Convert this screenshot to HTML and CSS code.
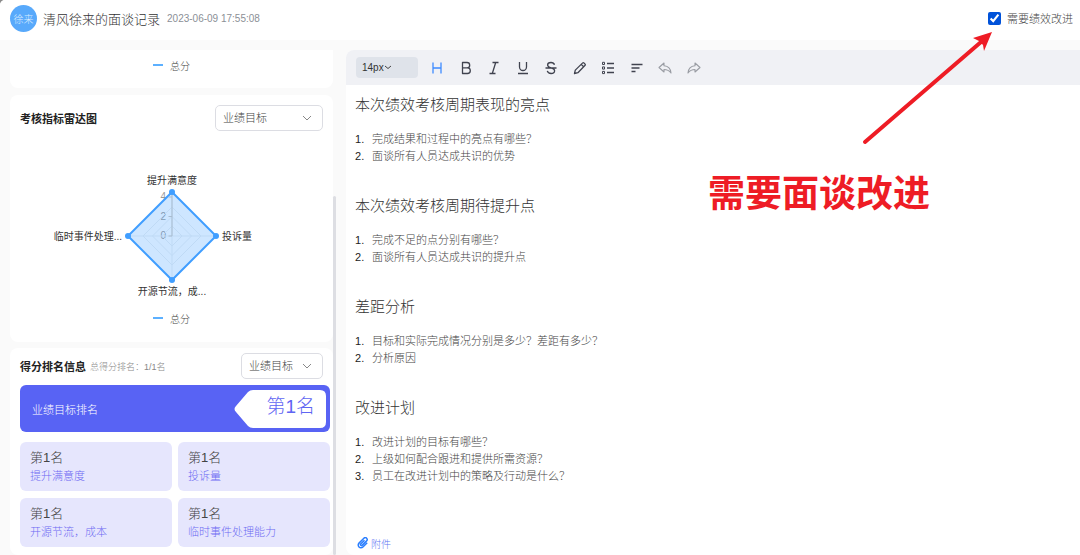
FILE: index.html
```html
<!DOCTYPE html>
<html lang="zh-CN">
<head>
<meta charset="utf-8">
<meta name="viewport" content="width=device-width, initial-scale=1">
<title>面谈记录</title>
<link rel="stylesheet" href="styles.css">
</head>
<body>
<div class="page">
  <header class="topbar">
    <span class="avatar">徐来</span>
    <h1 class="topbar-title">清风徐来的面谈记录</h1>
    <time class="topbar-time">2023-06-09 17:55:08</time>
    <label class="improve"><input type="checkbox" class="improve-box" checked>需要绩效改进</label>
  </header>

  <div class="layout">
    <aside class="side">
      <div class="side-cards">
        <section class="card card-cut">
          <div class="legend"><span class="legend-line"></span>总分</div>
        </section>

        <section class="card card-radar">
          <div class="card-head">
            <h2 class="card-title">考核指标雷达图</h2>
            <div class="picker picker-wide">
              <select class="picker-select" aria-label="雷达图指标"><option>业绩目标</option></select>
              <svg class="picker-arrow" viewBox="0 0 10 10"><path d="M1 3l4 4 4-4"/></svg>
            </div>
          </div>
          <svg class="radar" viewBox="0 0 240 130" role="img" aria-label="考核指标雷达图">
            <g class="radar-ticks">
              <text x="114" y="29">4</text><text x="114" y="49">2</text><text x="114" y="68">0</text>
            </g>
            <path class="radar-area" d="M120 21L164 65L120 109L76 65Z"/>
            <g class="radar-grid">
              <path d="M120 55l10 10-10 10-10-10zM120 45.500l19.500 19.500-19.500 19.500-19.500-19.500zM120 36l29 29-29 29-29-29z"/>
              <path d="M78 65H162M120 23V107"/>
            </g>
            <path class="radar-axis" d="M120 21V65M116.500 65H120M116.500 45.500H120M116.500 26H120"/>
            <g class="radar-dots">
              <circle cx="120" cy="21" r="3"/><circle cx="164" cy="65" r="3"/><circle cx="120" cy="109" r="3"/><circle cx="76" cy="65" r="3"/>
            </g>
            <g class="radar-labels">
              <text x="120" y="13" text-anchor="middle">提升满意度</text>
              <text x="170" y="69">投诉量</text>
              <text x="120" y="124" text-anchor="middle">开源节流，成...</text>
              <text x="70" y="69" text-anchor="end">临时事件处理...</text>
            </g>
          </svg>
          <div class="legend"><span class="legend-line"></span>总分</div>
        </section>

        <section class="card card-rank">
          <div class="card-head">
            <h2 class="card-title">得分排名信息</h2>
            <span class="card-note">总得分排名：1/1名</span>
            <div class="picker">
              <select class="picker-select" aria-label="排名指标"><option>业绩目标</option></select>
              <svg class="picker-arrow" viewBox="0 0 10 10"><path d="M1 3l4 4 4-4"/></svg>
            </div>
          </div>
          <div class="banner">
            <span>业绩目标排名</span>
            <div class="banner-tag">
              <svg class="banner-shape" viewBox="0 0 92 38"><path d="M19 0H86Q92 0 92 6V32Q92 38 86 38H19Q16 38 14 36L2 22Q-1 19 2 16L14 2Q16 0 19 0Z"/></svg>
              <strong class="banner-rank">第1名</strong>
            </div>
          </div>
          <div class="tiles">
            <div class="tile"><span class="tile-rank">第1名</span><span class="tile-name">提升满意度</span></div>
            <div class="tile"><span class="tile-rank">第1名</span><span class="tile-name">投诉量</span></div>
            <div class="tile"><span class="tile-rank">第1名</span><span class="tile-name">开源节流，成本</span></div>
            <div class="tile"><span class="tile-rank">第1名</span><span class="tile-name">临时事件处理能力</span></div>
          </div>
        </section>
      </div>
      <div class="side-scroll"><div class="side-thumb"></div></div>
    </aside>

    <main class="editor">
      <div class="toolbar">
        <div class="size">
          <select class="size-select" aria-label="字号"><option>14px</option></select>
          <svg class="size-arrow" viewBox="0 0 8 8"><path d="M1 3l3 2.500 3-2.500"/></svg>
        </div>
        <div class="tools">
          <button class="tool tool-on" aria-label="标题"><svg viewBox="0 0 16 16"><path d="M4 2.500v11M12 2.500v11M4 8h8"/></svg></button>
          <button class="tool" aria-label="加粗"><svg viewBox="0 0 16 16"><path d="M4.500 2.500h4.500a2.700 2.700 0 0 1 0 5.400H4.500zM4.500 7.900h5a2.800 2.800 0 0 1 0 5.600h-5z"/></svg></button>
          <button class="tool" aria-label="斜体"><svg viewBox="0 0 16 16"><path d="M6.500 2.500h6M3.500 13.500h6M9.700 2.500l-3.400 11"/></svg></button>
          <button class="tool" aria-label="下划线"><svg viewBox="0 0 16 16"><path d="M4.500 2v5a3.500 3.500 0 0 0 7 0V2M3 13.500h10"/></svg></button>
          <button class="tool" aria-label="删除线"><svg viewBox="0 0 16 16"><path d="M11.500 4.800C11 3.200 9.700 2.500 8 2.500 6 2.500 4.600 3.500 4.600 5.100c0 1.500 1.200 2.200 3.400 2.800 2.400.6 3.600 1.300 3.600 2.900 0 1.700-1.500 2.700-3.500 2.700-2 0-3.400-.9-3.800-2.600M2.500 8h11"/></svg></button>
          <button class="tool" aria-label="画笔"><svg viewBox="0 0 16 16"><path d="M2.500 13.500l.8-3.400 7.400-7.200q.6-.5 1.200 0l1.200 1.200q.5.600 0 1.200l-7.200 7.400zM9.200 4.400l2.400 2.400"/></svg></button>
          <button class="tool" aria-label="列表"><svg viewBox="0 0 16 16"><path d="M7 3.500h7M7 8h7M7 12.500h7"/><path class="thin" d="M2.500 2.300h2v2.200h-2zM2.500 6.900h2v2.200h-2zM2.500 11.400h2v2.200h-2z"/></svg></button>
          <button class="tool" aria-label="对齐"><svg viewBox="0 0 16 16"><path d="M2.500 4.500h11M2.500 8h8M2.500 11.500h4"/></svg></button>
          <button class="tool tool-off" aria-label="撤销"><svg viewBox="0 0 16 16"><path d="M7 3L2 7.500 7 12V9.500c3 0 5 .8 7 3.500-.3-4-2.800-7-7-7.300z"/></svg></button>
          <button class="tool tool-off" aria-label="重做"><svg viewBox="0 0 16 16"><path d="M9 3l5 4.500L9 12V9.500c-3 0-5 .8-7 3.500.3-4 2.800-7 7-7.300z"/></svg></button>
        </div>
      </div>
      <div class="doc">
        <section class="topic">
          <h3 class="topic-title">本次绩效考核周期表现的亮点</h3>
          <ol class="topic-list"><li>完成结果和过程中的亮点有哪些？</li><li>面谈所有人员达成共识的优势</li></ol>
        </section>
        <section class="topic">
          <h3 class="topic-title">本次绩效考核周期待提升点</h3>
          <ol class="topic-list"><li>完成不足的点分别有哪些？</li><li>面谈所有人员达成共识的提升点</li></ol>
        </section>
        <section class="topic">
          <h3 class="topic-title">差距分析</h3>
          <ol class="topic-list"><li>目标和实际完成情况分别是多少？差距有多少？</li><li>分析原因</li></ol>
        </section>
        <section class="topic">
          <h3 class="topic-title">改进计划</h3>
          <ol class="topic-list"><li>改进计划的目标有哪些？</li><li>上级如何配合跟进和提供所需资源？</li><li>员工在改进计划中的策略及行动是什么？</li></ol>
        </section>
        <a class="attach" href="#"><svg class="attach-icon" viewBox="0 0 12 12"><path d="M7.500 3.200L3.700 7a1 1 0 0 0 1.400 1.400l4.500-4.500a1.900 1.900 0 0 0-2.700-2.700L2 6.100a2.700 2.700 0 0 0 3.900 3.900l4.300-4.300"/></svg>附件</a>
      </div>
    </main>
  </div>

  <svg class="arrow" viewBox="0 0 130 114"><path class="arrow-line" d="M3 110L119 10"/><path class="arrow-head" d="M130 0L111 6L117 9L121 13L122 19Z"/></svg>
  <p class="callout">需要面谈改进</p>
</div>
</body>
</html>
```

FILE: styles.css
```css
* {
  box-sizing: border-box;
}

html {
  background: #8a8a8a;
}

body {
  margin: 0;
  font-family: "Liberation Sans", "Noto Sans CJK SC", sans-serif;
  font-size: 11px;
  font-weight: 300;
  color: #444;
}

h1, h2, h3, p, ol {
  margin: 0;
  padding: 0;
}

select, button, input {
  font: inherit;
  color: inherit;
}

.page {
  position: relative;
  display: flex;
  flex-direction: column;
  height: 100vh;
  min-height: 555px;
  overflow: hidden;
  background: #fafafa;
  border-top-left-radius: 5px;
}

/* Top bar */
.topbar {
  display: flex;
  align-items: center;
  flex: none;
  height: 40px;
  padding: 0 7px 4px 10px;
  background: #fff;
}

.avatar {
  display: flex;
  align-items: center;
  justify-content: center;
  width: 27px;
  height: 27px;
  border-radius: 50%;
  background: #58a9fb;
  color: #d8ebff;
  font-size: 10px;
}

.topbar-title {
  margin: 0 7px 0 6px;
  font-size: 13px;
  font-weight: 300;
  color: #333;
}

.topbar-time {
  font-size: 10px;
  color: #8b8f96;
}

.improve {
  display: flex;
  align-items: center;
  gap: 6px;
  margin-left: auto;
}

.improve-box {
  width: 13px;
  height: 13px;
  margin: 0;
  accent-color: #0052d9;
}

/* Columns */
.layout {
  display: flex;
  flex: 1;
  gap: 10px;
  min-height: 0;
  padding-top: 10px;
}

.side {
  display: flex;
  flex: none;
  width: 336px;
  padding-left: 10px;
}

.side-cards {
  flex: 1;
  overflow: hidden;
}

.side-scroll {
  width: 3px;
  padding-top: 146px;
}

.side-thumb {
  height: 100%;
  border-radius: 2px;
  background: #dddee3;
}

.card {
  margin-bottom: 7px;
  border-radius: 8px;
  background: #fff;
}

.card-cut {
  padding: 7px 0 15px;
  border-radius: 0 0 8px 8px;
}

.card-radar {
  margin-bottom: 6px;
  padding: 10px 10px 16px;
}

.card-rank {
  padding: 5px 3px 8px 10px;
}

.card-rank .card-head {
  padding-right: 7px;
}

.card-head {
  display: flex;
  align-items: center;
}

.card-title {
  font-size: 11px;
  font-weight: 700;
  color: #222;
}

.card-note {
  margin-left: 4px;
  font-size: 9px;
  color: #888;
}

.picker {
  position: relative;
  width: 82px;
  margin-left: auto;
}

.picker-wide {
  width: 108px;
}

.picker-select {
  display: block;
  width: 100%;
  height: 26px;
  padding: 0 20px 0 7px;
  border: 1px solid #dcdde3;
  border-radius: 5px;
  background: #fff;
  color: #444;
  appearance: none;
}

.picker-arrow {
  position: absolute;
  top: 8px;
  right: 11px;
  width: 10px;
  height: 10px;
  fill: none;
  stroke: #888;
  pointer-events: none;
}

.legend {
  display: flex;
  align-items: center;
  justify-content: center;
  gap: 7px;
  height: 16px;
  font-size: 10px;
  color: #444;
}

.legend-line {
  width: 10px;
  height: 2px;
  background: #5cb0ff;
}

/* Radar chart */
.radar {
  display: block;
  width: 240px;
  height: 130px;
  margin: 40px auto 9px;
  font-size: 10px;
}

.radar-grid {
  fill: none;
  stroke: #bfdaf5;
}

.radar-ticks {
  fill: #999;
  text-anchor: end;
}

.radar-area {
  fill: rgba(64, 158, 255, 0.26);
  stroke: #409eff;
  stroke-width: 2;
}

.radar-axis {
  fill: none;
  stroke: #a9bccf;
}

.radar-dots {
  fill: #409eff;
}

.radar-labels {
  font-weight: 400;
  fill: #333;
}

/* Ranking */
.banner {
  display: flex;
  align-items: center;
  justify-content: space-between;
  height: 47px;
  margin: 6px 0 10px;
  padding: 0 4px 0 12px;
  border-radius: 6px;
  background: #5863f4;
  color: #fff;
}

.banner-tag {
  position: relative;
  display: flex;
  align-items: center;
  justify-content: flex-end;
  width: 92px;
  height: 38px;
  padding-right: 11px;
}

.banner-shape {
  position: absolute;
  inset: 0;
  fill: #fff;
}

.banner-rank {
  position: relative;
  font-size: 19px;
  font-weight: 300;
  line-height: 34px;
  padding-bottom: 4px;
  color: #5f66f3;
}

.tiles {
  display: grid;
  grid-template-columns: 1fr 1fr;
  gap: 7px 6px;
}

.tile {
  display: flex;
  flex-direction: column;
  height: 49px;
  padding: 7px 10px;
  border-radius: 6px;
  background: #e6e6fd;
}

.tile-rank {
  font-size: 13px;
  line-height: 18px;
  color: #444;
}

.tile-name {
  line-height: 18px;
  color: #6e6bf3;
}

/* Editor */
.editor {
  display: flex;
  flex: 1;
  flex-direction: column;
  min-width: 0;
  border-radius: 8px 0 0 8px;
  background: #fff;
  overflow: hidden;
}

.toolbar {
  display: flex;
  align-items: center;
  gap: 5px;
  height: 35px;
  padding-left: 10px;
  background: #f0f1f5;
}

.size {
  position: relative;
  width: 62px;
}

.size-select {
  display: block;
  width: 100%;
  height: 21px;
  padding: 0 6px;
  border: 0;
  border-radius: 4px;
  background: #dfe3ea;
  font-size: 10px;
  color: #333;
  appearance: none;
}

.size-arrow {
  position: absolute;
  top: 6px;
  left: 28px;
  width: 8px;
  height: 8px;
  fill: none;
  stroke: #444;
  pointer-events: none;
}

.tools {
  display: flex;
  width: 285px;
}

.tool {
  display: flex;
  flex: 1;
  justify-content: center;
  padding: 0;
  border: 0;
  background: none;
  color: #40434f;
}

.tool svg {
  width: 16px;
  height: 16px;
  fill: none;
  stroke: currentColor;
  stroke-width: 1.3;
  stroke-linejoin: round;
}

.tool .thin {
  stroke-width: 1;
}

.tool-on {
  color: #3d8bff;
}

.tool-off {
  color: #999ca3;
}

.tool-off svg {
  stroke-width: 1.1;
}

.doc {
  display: flex;
  flex: 1;
  flex-direction: column;
  padding: 10px 9px 4px;
}

.topic {
  margin-bottom: 31px;
}

.topic:last-of-type {
  margin-bottom: 0;
}

.topic-title {
  margin-bottom: 16px;
  font-size: 15px;
  font-weight: 300;
  line-height: 20px;
  color: #333;
}

.topic-list {
  line-height: 17px;
  list-style: none;
  counter-reset: item;
}

.topic-list li {
  display: flex;
  counter-increment: item;
}

.topic-list li::before {
  content: counter(item) ".";
  flex: none;
  width: 17px;
  color: #222;
}

.attach {
  display: flex;
  align-items: center;
  gap: 2px;
  height: 16px;
  margin-top: auto;
  padding-left: 2px;
  font-size: 10px;
  color: #6478f3;
  text-decoration: none;
}

.attach-icon {
  width: 12px;
  height: 12px;
  fill: none;
  stroke: #2b7fff;
  stroke-width: 1.5;
}

/* Annotation over the page */
.arrow {
  position: absolute;
  top: 32px;
  right: 88px;
  width: 130px;
  height: 114px;
  pointer-events: none;
}

.arrow-line {
  fill: none;
  stroke: #ee1c25;
  stroke-width: 4;
  stroke-linecap: round;
}

.arrow-head {
  fill: #ee1c25;
}

.callout {
  position: absolute;
  top: 171px;
  right: 150px;
  font-size: 37px;
  font-weight: 700;
  line-height: 48px;
  color: #ee1c25;
}
```
